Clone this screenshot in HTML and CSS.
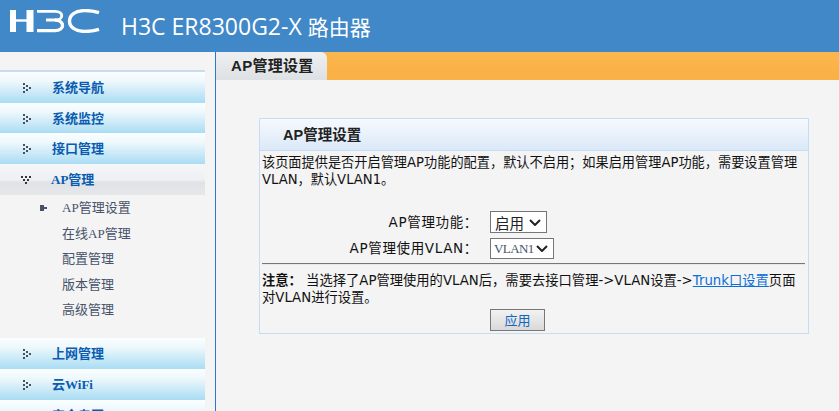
FILE: index.html
```html
<!DOCTYPE html>
<html lang="zh">
<head>
<meta charset="utf-8">
<title>H3C ER8300G2-X 路由器</title>
<link rel="stylesheet" href="styles.css">
</head>
<body>
<header class="top">
  <svg class="logo" width="92" height="24" viewBox="0 0 92 24" aria-label="H3C">
    <g fill="none" stroke="#fff">
      <path d="M4 1V23" stroke-width="6"/>
      <path d="M21 1V23" stroke-width="7"/>
      <path d="M4 11.5H21" stroke-width="2.4"/>
      <path d="M28 2.4H46C55 2.4 55 11 46 11H37" stroke-width="2.8"/>
      <path d="M46 11C56 11.4 56 21.6 46 21.6H28" stroke-width="3.4"/>
      <path d="M90 3.6C85 2 81 1.6 76 1.6C66 1.6 60.5 6 60.5 12C60.5 18 66 22.4 76 22.4C81 22.4 85 22 90 20.4" stroke-width="3.4"/>
    </g>
  </svg>
  <h1 class="product">H3C ER8300G2-X <span class="product-cjk">路由器</span></h1>
</header>
<div class="main">
  <nav class="side">
    <div class="cap"></div>
    <a class="nav"><svg class="ico" width="12" height="12" viewBox="0 0 12 12"><use href="#closed"/></svg><span>系统导航</span></a>
    <a class="nav nav-short"><svg class="ico" width="12" height="12" viewBox="0 0 12 12"><use href="#closed"/></svg><span>系统监控</span></a>
    <a class="nav"><svg class="ico" width="12" height="12" viewBox="0 0 12 12"><use href="#closed"/></svg><span>接口管理</span></a>
    <a class="nav open"><svg class="ico" width="12" height="12" viewBox="0 0 12 12"><use href="#opened"/></svg><span><i>AP</i>管理</span></a>
    <ul class="sub">
      <li class="cur"><svg class="mark" width="7" height="6" viewBox="0 0 7 6"><path d="M0 0H4V2H7V4H4V6H0Z" fill="#47536a"/></svg><i>AP</i>管理设置</li>
      <li>在线<i>AP</i>管理</li>
      <li>配置管理</li>
      <li>版本管理</li>
      <li>高级管理</li>
    </ul>
    <a class="nav"><svg class="ico" width="12" height="12" viewBox="0 0 12 12"><use href="#closed"/></svg><span>上网管理</span></a>
    <a class="nav"><svg class="ico" width="12" height="12" viewBox="0 0 12 12"><use href="#closed"/></svg><span>云<i>WiFi</i></span></a>
    <a class="nav"><svg class="ico" width="12" height="12" viewBox="0 0 12 12"><use href="#closed"/></svg><span>安全专区</span></a>
  </nav>
  <main class="content">
    <div class="tabbar"><div class="tab">AP管理设置</div></div>
    <section class="panel">
      <h2 class="panel-title">AP管理设置</h2>
      <p class="desc">该页面提供是否开启管理AP功能的配置，默认不启用；如果启用管理AP功能，需要设置管理VLAN，默认VLAN1。</p>
      <div class="form">
        <label class="lbl">AP管理功能：</label>
        <select class="sel sel-a"><option>启用</option><option>禁用</option></select>
        <label class="lbl">AP管理使用VLAN：</label>
        <select class="sel sel-b"><option>VLAN1</option></select>
      </div>
      <hr class="rule">
      <p class="note"><b>注意：</b> 当选择了AP管理使用的VLAN后，需要去接口管理-&gt;VLAN设置-&gt;<a class="link">Trunk口设置</a>页面对VLAN进行设置。</p>
      <div class="actions"><button class="btn" type="button">应用</button></div>
    </section>
  </main>
</div>
<svg width="0" height="0" class="defs">
  <defs>
    <g id="closed" fill="#4a4f5c">
      <rect x="1" y="1" width="2" height="2"/><rect x="1" y="5" width="2" height="2"/><rect x="1" y="9" width="2" height="2"/>
      <rect x="4" y="3" width="2" height="2"/><rect x="4" y="7" width="2" height="2"/><rect x="7" y="5" width="2" height="2"/>
    </g>
    <g id="opened" fill="#33353c">
      <rect x="0" y="2" width="2" height="2"/><rect x="4" y="2" width="2" height="2"/><rect x="8" y="2" width="2" height="2"/>
      <rect x="2" y="5" width="2" height="2"/><rect x="6" y="5" width="2" height="2"/><rect x="4" y="8" width="2" height="2"/>
    </g>
  </defs>
</svg>
</body>
</html>
```
FILE: styles.css
```css
* { box-sizing: border-box; }
html, body { margin: 0; height: 411px; overflow: hidden; }
body {
  background: #f4f4f4;
  color: #111;
  font-family: "DejaVu Sans", "Noto Sans CJK SC", sans-serif;
  font-size: 13px;
}
.defs { position: absolute; }
.top {
  height: 52px;
  background: #4088c8;
  display: flex;
  align-items: center;
  padding-left: 9px;
  color: #fff;
}
.logo { align-self: flex-start; margin-top: 9px; flex: none; }
.product {
  margin: 0 0 0 20px;
  font: 400 23px "Open Sans", "Noto Sans CJK SC", sans-serif;
}
.product-cjk { font-size: 21px; }
.main { display: flex; height: 359px; }
.side {
  width: 216px;
  flex: none;
  border-right: 1px solid #2a78cc;
  padding: 18px 10px 0 0;
  overflow: hidden;
  font-family: "Liberation Sans", "Noto Sans CJK SC", sans-serif;
}
.cap { height: 2px; background: #c9dcee; }
.nav {
  height: 31px;
  display: flex;
  align-items: center;
  padding: 1px 0 0 22px;
  background: linear-gradient(#fbfeff, #eef8fc 30%, #a9dcf3);
  color: #0a5cb0;
  font-weight: 700;
}
.nav-short { height: 30px; }
.nav .ico { flex: none; margin-right: 18px; }
.nav span { line-height: 16px; }
.nav i, .sub i { font-family: "Liberation Serif", serif; font-style: normal; }
.nav.open { background: linear-gradient(#f6f6f8, #eef0f3 50%, #dfe2e6 60%, #e6e8ea); padding-left: 21px; }
.sub {
  list-style: none;
  margin: 0;
  padding: 0 0 15.5px 62px;
  color: #47536a;
}
.sub li { height: 25.5px; line-height: 25.5px; position: relative; }
.mark { position: absolute; left: -22px; top: 10px; }
.tabbar {
  height: 28px;
  background: linear-gradient(#fcb64d, #f9b045);
}
.tab {
  width: 111px;
  height: 28px;
  padding-left: 15px;
  line-height: 27px;
  font-family: "Liberation Sans", "Noto Sans CJK SC", sans-serif;
  font-size: 15px;
  letter-spacing: .3px;
  font-weight: 700;
  color: #222;
  background: linear-gradient(#eef0f1, #dde1e4);
  border-top-right-radius: 6px;
}
.content { flex: 1; min-width: 0; }
.panel {
  width: 550px;
  height: 216px;
  margin: 38px 0 0 43px;
  border: 1px solid #c6dcf0;
  display: flex;
  flex-direction: column;
}
.panel-title {
  margin: 0;
  height: 32px;
  padding-left: 23px;
  font-family: "Liberation Sans", "Noto Sans CJK SC", sans-serif;
  font-size: 14.5px;
  line-height: 32px;
  font-weight: 700;
  color: #222;
  background: linear-gradient(#f6f9fd, #dbe9f9);
  border-bottom: 1px solid #c6dcf0;
}
.desc {
  margin: 4px 8px 0 2px;
  font-size: 13.2px;
  line-height: 16.5px;
}
.form {
  margin-top: 23px;
  display: grid;
  grid-template-columns: 218px auto;
  column-gap: 12px;
  row-gap: 4px;
  justify-content: start;
  align-items: center;
}
.lbl { text-align: right; font-size: 13.5px; letter-spacing: .65px; padding-bottom: 2px; }
.sel {
  -webkit-appearance: none;
  appearance: none;
  height: 22px;
  background: #fff url("data:image/svg+xml,%3Csvg xmlns='http://www.w3.org/2000/svg' width='12' height='7'%3E%3Cpath d='M1 1L6 6L11 1' fill='none' stroke='%23222' stroke-width='2'/%3E%3C/svg%3E") no-repeat right 5px center;
  border: 1px solid #767676;
  border-radius: 0;
  color: #222;
  padding: 0 0 0 4px;
  justify-self: start;
}
.sel-a { width: 57px; font-size: 14.5px; font-family: "Noto Sans CJK SC", sans-serif; }
.sel-b { width: 64px; height: 21px; padding-left: 3px; font-family: "Liberation Serif", serif; color: #47536a; font-size: 13px; letter-spacing: -.6px; }
.rule {
  margin: 4px 3px 0 2px;
  border: 0;
  border-top: 1px solid #777;
  border-bottom: 1px solid #e8e8e8;
  height: 2px;
}
.note { margin: 8px 8px 0 2px; font-size: 13.3px; line-height: 16.5px; }
.link { color: #0d6fd8; text-decoration: underline; }
.actions { margin-top: 3px; padding-left: 230px; }
.btn {
  width: 55px;
  height: 22px;
  padding: 0 0 2px;
  border: 1px solid #777;
  background: linear-gradient(#f2f2f2, #d9d9d9);
  color: #1465c0;
  font: 13px "Noto Sans CJK SC", sans-serif;
}
```
